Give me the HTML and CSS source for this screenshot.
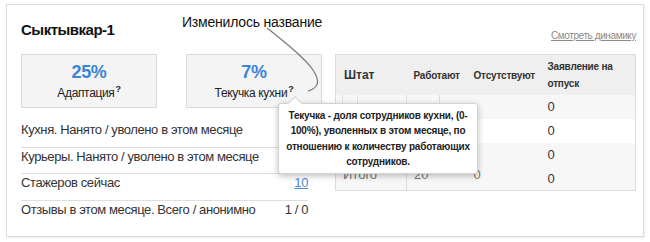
FILE: index.html
```html
<!DOCTYPE html>
<html lang="ru">
<head>
<meta charset="utf-8">
<title>Сыктывкар-1</title>
<link rel="stylesheet" href="styles.css">
</head>
<body>
<div class="panel">
  <div class="head">
    <h1 class="title">Сыктывкар-1</h1>
    <a class="dyn-link" href="#">Смотреть динамику</a>
  </div>
  <div class="main">
    <div class="left">
      <div class="cards">
        <div class="card">
          <div class="pct">25%</div>
          <div class="label">Адаптация<span class="q">?</span></div>
        </div>
        <div class="card">
          <div class="pct">7%</div>
          <div class="label">Текучка кухни<span class="q">?</span></div>
        </div>
      </div>
      <div class="list">
        <div class="row"><span>Кухня. Нанято / уволено в этом месяце</span><span></span></div>
        <div class="row"><span>Курьеры. Нанято / уволено в этом месяце</span><span></span></div>
        <div class="row"><span>Стажеров сейчас</span><a class="val-link" href="#">10</a></div>
        <div class="row"><span>Отзывы в этом месяце. Всего / анонимно</span><span>1 / 0</span></div>
      </div>
    </div>
    <table class="staff">
      <thead>
        <tr>
          <th class="c1 big">Штат</th>
          <th class="c2">Работают</th>
          <th class="c3">Отсутствуют</th>
          <th class="c4 wrap">Заявление на отпуск</th>
        </tr>
      </thead>
      <tbody>
        <tr class="shade">
          <td class="c1"><span class="box1"></span></td>
          <td class="c2"><span class="box2"></span></td>
          <td class="c3"></td>
          <td class="c4">0</td>
        </tr>
        <tr>
          <td class="c1"></td>
          <td class="c2"></td>
          <td class="c3"></td>
          <td class="c4">0</td>
        </tr>
        <tr class="shade">
          <td class="c1"></td>
          <td class="c2"></td>
          <td class="c3"></td>
          <td class="c4">0</td>
        </tr>
        <tr class="shade">
          <td class="c1 ghost">Итого</td>
          <td class="c2 ghost">20</td>
          <td class="c3 ghost">0</td>
          <td class="c4">0</td>
        </tr>
      </tbody>
    </table>
  </div>
  <div class="tooltip">Текучка - доля сотрудников кухни, (0-<br>100%), уволенных в этом месяце, по<br>отношению к количеству работающих<br>сотрудников.</div>
</div>
<div class="annot">Изменилось название</div>
<svg class="curve" width="650" height="242" viewBox="0 0 650 242">
  <path d="M267,28 C285,42 305,58 313,70 S318,88 308,91" fill="none" stroke="#777" stroke-width="1.2"/>
</svg>
</body>
</html>
```
FILE: styles.css
```css
html, body {
  margin: 0;
  padding: 0;
  background: #fff;
}
body {
  position: relative;
  width: 650px;
  height: 242px;
  overflow: hidden;
  font-family: "Liberation Sans", Arial, sans-serif;
  color: #333;
}
.panel {
  position: relative;
  margin: 4px 0 0 6px;
  width: 638px;
  height: 233px;
  box-sizing: border-box;
  border: 1px solid #dcdcdc;
  box-shadow: 1px 1px 2px rgba(0, 0, 0, 0.08);
  padding: 15px 7px 0 14px;
}
.head {
  display: flex;
  justify-content: space-between;
  align-items: flex-start;
  height: 20px;
}
.title {
  margin: 0;
  font-size: 15px;
  line-height: 20px;
  font-weight: bold;
  letter-spacing: -0.5px;
  color: #111;
}
.dyn-link {
  padding-top: 10px;
  font-size: 10px;
  line-height: 12px;
  letter-spacing: -0.4px;
  color: #8a8a8a;
  text-decoration: underline;
}
.main {
  display: flex;
  gap: 13px;
  margin-top: 14px;
}
.left {
  width: 301px;
}
.cards {
  display: flex;
  gap: 29px;
}
.card {
  width: 136px;
  height: 54px;
  box-sizing: border-box;
  border: 1px solid #d9d9d9;
  background: #f4f4f4;
  text-align: center;
  padding-top: 6px;
}
.pct {
  font-size: 18px;
  line-height: 22px;
  font-weight: bold;
  letter-spacing: -0.3px;
  color: #3c84d4;
}
.label {
  margin-top: 2px;
  font-size: 12px;
  line-height: 16px;
  letter-spacing: -0.35px;
  color: #222;
}
.q {
  position: relative;
  top: -5px;
  margin-left: 1px;
  font-size: 9px;
  font-weight: bold;
}
.list {
  width: 287px;
  margin-top: 13px;
}
.row {
  display: flex;
  justify-content: space-between;
  font-size: 13px;
  line-height: 17px;
  letter-spacing: -0.4px;
  padding-bottom: 8.5px;
  border-bottom: 1px solid #dedede;
  color: #333;
}
.row:last-child {
  border-bottom: none;
}
.val-link {
  color: #4a86d8;
  text-decoration: underline;
}
.staff {
  width: 300px;
  height: 136px;
  border-collapse: collapse;
  border: 1px solid #dcdcdc;
  table-layout: fixed;
  align-self: flex-start;
}
.staff th {
  height: 40px;
  box-sizing: border-box;
  background: #efefef;
  text-align: left;
  font-size: 10px;
  line-height: 17px;
  letter-spacing: -0.2px;
  font-weight: bold;
  color: #333;
  padding: 3px 0 3px 7px;
  white-space: nowrap;
  vertical-align: middle;
}
.staff th.big {
  font-size: 12px;
  letter-spacing: 0;
  padding-left: 8px;
}
.staff th.wrap {
  white-space: normal;
}
.staff .c1 { width: 71px; }
.staff .c2 { width: 60px; }
.staff .c3 { width: 74px; }
.staff .c4 { width: 95px; }
.staff td {
  height: 23.75px;
  padding: 0 0 0 7px;
  font-size: 13px;
  line-height: 17px;
  color: #333;
  background: #fff;
  vertical-align: middle;
}
.staff td.ghost {
  color: #777;
  vertical-align: top;
  padding-top: 0;
}
.staff tr.shade td {
  background: #f7f7f7;
}
.staff td.c1 {
  border-right: 1px solid #dcdcdc;
}
.box1 {
  display: block;
  width: 14px;
  height: 23px;
  margin-left: -1px;
  border-left: 1px solid #dcdcdc;
  border-right: 1px solid #dcdcdc;
}
.box2 {
  display: block;
  width: 25px;
  height: 23px;
  border-right: 1px solid #dcdcdc;
}
.tooltip {
  position: absolute;
  left: 271px;
  top: 98px;
  width: 200px;
  height: 71px;
  box-sizing: border-box;
  background: #fff;
  border: 1px solid #d2d2d2;
  border-radius: 3px;
  box-shadow: 0 2px 6px rgba(0, 0, 0, 0.25);
  padding: 4px 4px 0;
  text-align: center;
  font-size: 10px;
  line-height: 15.3px;
  letter-spacing: -0.2px;
  font-weight: bold;
  color: #222;
  white-space: nowrap;
}
.tooltip::before {
  content: "";
  position: absolute;
  left: 11px;
  top: -6px;
  width: 10px;
  height: 10px;
  box-sizing: border-box;
  background: #fff;
  border-top: 1px solid #d2d2d2;
  border-left: 1px solid #d2d2d2;
  transform: rotate(45deg);
}
.annot {
  position: absolute;
  left: 182px;
  top: 14px;
  font-size: 14px;
  line-height: 16px;
  letter-spacing: -0.2px;
  color: #111;
  white-space: nowrap;
}
.curve {
  position: absolute;
  left: 0;
  top: 0;
  pointer-events: none;
}
```
